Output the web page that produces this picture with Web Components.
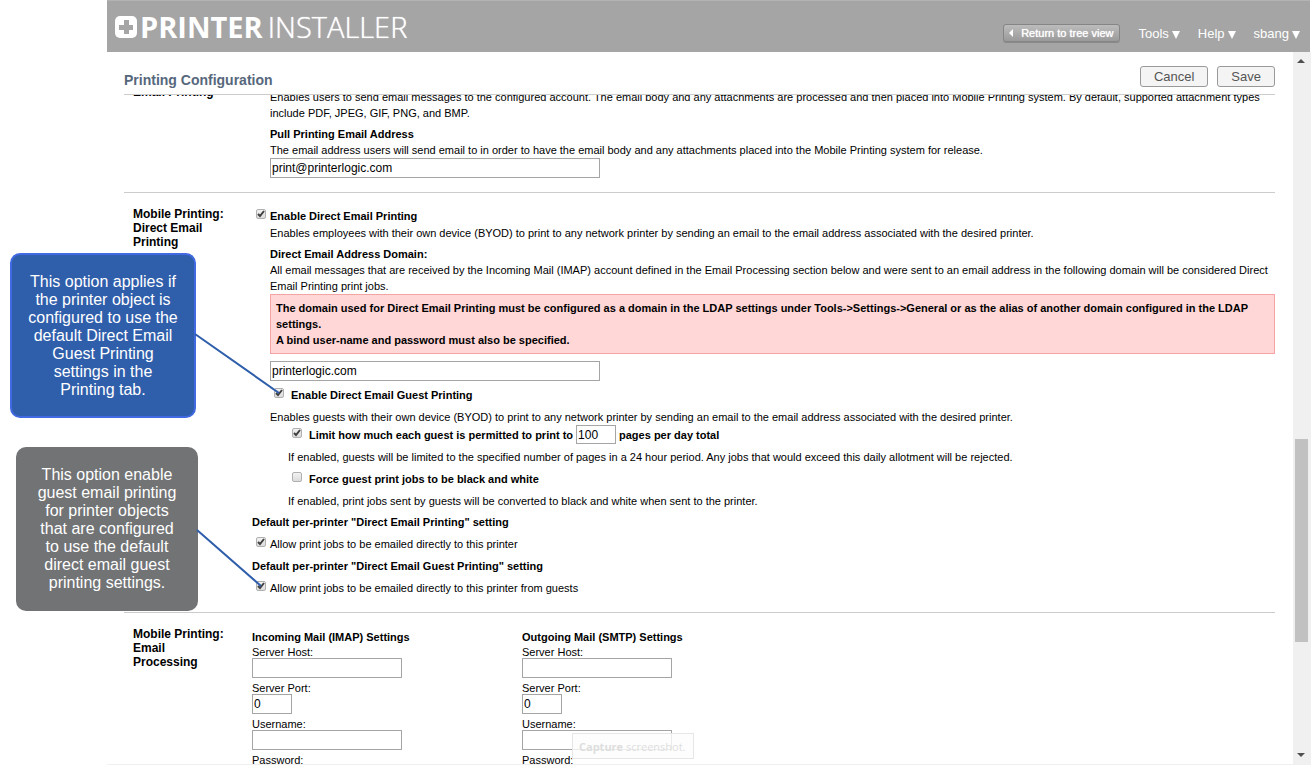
<!DOCTYPE html>
<html lang="en">
<head>
<meta charset="utf-8">
<title>Printer Installer - Printing Configuration</title>
<style>
  body { margin: 0; background: #fff; color: #000; font: 11px/16px "Liberation Sans", Arial, sans-serif; }
  b { font-weight: bold; }
</style>
</head>
<body>
<pi-app>
  <pi-header slot="header">
    <pi-menu>Tools</pi-menu>
    <pi-menu>Help</pi-menu>
    <pi-menu>sbang</pi-menu>
  </pi-header>
  <pi-titlebar slot="title">Printing Configuration</pi-titlebar>

  <pi-section heading="Email Printing" class="first">
    <pi-text indent="1">Enables users to send email messages to the configured account. The email body and any attachments are processed and then placed into Mobile Printing system. By default, supported attachment types include PDF, JPEG, GIF, PNG, and BMP.</pi-text>
    <pi-field indent="1" bold gap="5" label="Pull Printing Email Address" value="print@printerlogic.com">The email address users will send email to in order to have the email body and any attachments placed into the Mobile Printing system for release.</pi-field>
  </pi-section>

  <pi-section heading="Mobile Printing: Direct Email Printing">
    <pi-check bold checked label="Enable Direct Email Printing"></pi-check>
    <pi-text indent="1" gap="1">Enables employees with their own device (BYOD) to print to any network printer by sending an email to the email address associated with the desired printer.</pi-text>
    <pi-field indent="1" bold gap="5" label="Direct Email Address Domain:" value="printerlogic.com">All email messages that are received by the Incoming Mail (IMAP) account defined in the Email Processing section below and were sent to an email address in the following domain will be considered Direct Email Printing print jobs.<pi-alert slot="note">The domain used for Direct Email Printing must be configured as a domain in the LDAP settings under Tools-&gt;Settings-&gt;General or as the alias of another domain configured in the LDAP settings.<br>A bind user-name and password must also be specified.</pi-alert></pi-field>
    <pi-check indent="1" wide bold checked gap="6" label="Enable Direct Email Guest Printing"></pi-check>
    <pi-text indent="1" gap="6">Enables guests with their own device (BYOD) to print to any network printer by sending an email to the email address associated with the desired printer.</pi-text>
    <pi-check indent="2" wide bold checked label="Limit how much each guest is permitted to print to"><pi-pages></pi-pages></pi-check>
    <pi-text indent="2" gap="5">If enabled, guests will be limited to the specified number of pages in a 24 hour period. Any jobs that would exceed this daily allotment will be rejected.</pi-text>
    <pi-check indent="2" wide bold gap="6" label="Force guest print jobs to be black and white"></pi-check>
    <pi-text indent="2" gap="6">If enabled, print jobs sent by guests will be converted to black and white when sent to the printer.</pi-text>
    <pi-text gap="5"><b>Default per-printer "Direct Email Printing" setting</b></pi-text>
    <pi-check checked gap="6" label="Allow print jobs to be emailed directly to this printer"></pi-check>
    <pi-text gap="6"><b>Default per-printer "Direct Email Guest Printing" setting</b></pi-text>
    <pi-check checked gap="6" label="Allow print jobs to be emailed directly to this printer from guests"></pi-check>
  </pi-section>

  <pi-section heading="Mobile Printing: Email Processing" class="last">
    <pi-mail>
      <pi-server heading="Incoming Mail (IMAP) Settings"></pi-server>
      <pi-server heading="Outgoing Mail (SMTP) Settings"></pi-server>
    </pi-mail>
  </pi-section>

  <pi-callouts slot="overlay">
    <pi-callout tone="blue">This option applies if the printer object is configured to use the default Direct Email Guest Printing settings in the Printing tab.</pi-callout>
    <pi-callout tone="gray">This option enable guest email printing for printer objects that are configured to use the default direct email guest printing settings.</pi-callout>
  </pi-callouts>
  <pi-hint slot="overlay"><b>Capture</b> screenshot.</pi-hint>
</pi-app>

<script>
const define = (name, render) => customElements.define(name, class extends HTMLElement {
  constructor() {
    super();
    this.attachShadow({ mode: "open" });
  }
  connectedCallback() {
    const t = document.createElement("template");
    t.innerHTML = render(this);
    this.shadowRoot.replaceChildren(t.content.cloneNode(true));
  }
});
const indentOf = el => Number(el.getAttribute("indent") || 0) * 18;
const gapOf = el => Number(el.getAttribute("gap") || 0);
const inputCss = `input[type=text] { box-sizing: border-box; height: 20px; margin: 0; padding: 0 1px; border: 1px solid #a5a5a5; background: #fff; color: #000; font: 12px "Liberation Sans", Arial, sans-serif; }`;

define("pi-app", () => `
  <style>
    :host { display: flex; flex-direction: column; position: relative; box-sizing: border-box; height: 100vh; padding-left: 107px; overflow: hidden; }
    .work { flex: 1; min-height: 0; display: flex; border-bottom: 1px solid #f0f0f0; }
    .pane { flex: 1; min-width: 0; display: flex; flex-direction: column; padding: 0 18px 0 17px; }
    .scroll { flex: 1; min-height: 0; overflow: hidden; }
  </style>
  <slot name="header"></slot>
  <div class="work">
    <main class="pane">
      <slot name="title"></slot>
      <div class="scroll"><slot></slot></div>
    </main>
    <pi-scrollbar></pi-scrollbar>
  </div>
  <slot name="overlay"></slot>`);

define("pi-header", () => `
  <style>
    :host { display: flex; justify-content: space-between; box-sizing: border-box; height: 52px; margin-right: 1px; padding: 0 10px 0 8px; background: #a5a5a5; border-top: 1px solid #b3b3b3; color: #fff; }
    .logo { display: flex; align-items: center; gap: 3px; height: 52px; color: #fff; text-decoration: none; font: 29px/52px "Open Sans", "Noto Sans", sans-serif; }
    .logo b { font-weight: 700; }
    .logo span { font-weight: 300; margin-left: 2px; text-shadow: 0 0 1px #fff; }
    nav { display: flex; align-items: center; gap: 18px; height: 66px; }
    .back { display: flex; align-items: center; gap: 7px; box-sizing: border-box; height: 18px; margin-bottom: 2px; padding: 0 6px 0 5px; border: 1px solid #858585; border-radius: 3px; background: linear-gradient(#bcbcbc, #9a9a9a); box-shadow: 0 1px 0 #8a8a8a; color: #fff; font: 11px/16px "Liberation Sans", Arial, sans-serif; text-shadow: 0 0 1px #fff; }
  </style>
  <a class="logo" href="#">
    <svg width="22" height="22" viewBox="0 0 22 22" aria-hidden="true"><rect width="22" height="22" rx="5" fill="#fff"/><path d="M9 4h5v5h4v5h-4v4H9v-4H4V9h5z" fill="#a5a5a5"/></svg>
    <b>PRINTER</b><span>INSTALLER</span>
  </a>
  <nav>
    <button class="back" type="button"><svg width="5" height="8" viewBox="0 0 5 8" aria-hidden="true"><path d="M4 0v8L0 4z" fill="#fff"/></svg>Return to tree view</button>
    <slot></slot>
  </nav>`);

define("pi-menu", () => `
  <style>
    :host { display: block; }
    button { display: flex; align-items: center; gap: 3px; margin: 0; padding: 0; border: 0; background: none; color: #fff; font: 13px/18px "Liberation Sans", Arial, sans-serif; }
    svg { margin-top: 2px; }
  </style>
  <button type="button"><slot></slot><svg width="8" height="8" viewBox="0 0 8 8" aria-hidden="true"><path d="M0 0h8L4 8z" fill="#fff"/></svg></button>`);

define("pi-titlebar", () => `
  <style>
    :host { display: flex; justify-content: space-between; align-items: flex-start; box-sizing: border-box; height: 43px; padding-top: 14px; border-bottom: 1px solid #ccc; }
    h1 { margin: 6px 0 0; color: #56677c; font: bold 14px/16px "Liberation Sans", Arial, sans-serif; }
    div { display: flex; gap: 9px; }
    button { box-sizing: border-box; height: 21px; padding: 0 13px; border: 1px solid #999; border-radius: 3px; background: #f4f4f4; color: #555; font: 13px/18px "Liberation Sans", Arial, sans-serif; }
  </style>
  <h1><slot></slot></h1>
  <div><button type="button">Cancel</button><button type="button">Save</button></div>`);

define("pi-scrollbar", () => `
  <style>
    :host { display: flex; flex-direction: column; flex: 0 0 18px; background: #f0f0f0; }
    button { display: flex; align-items: center; justify-content: center; height: 18px; padding: 0 2px 0 0; border: 0; background: none; }
    .before { flex: 369; }
    .thumb { flex: 203; margin: 0 3px 0 2px; background: #c1c1c1; }
    .after { flex: 104; }
  </style>
  <button type="button" aria-label="Scroll up"><svg width="8" height="4"><path d="M0 4L4 0L8 4z" fill="#505050"/></svg></button>
  <div class="before"></div><div class="thumb"></div><div class="after"></div>
  <button type="button" aria-label="Scroll down"><svg width="8" height="4"><path d="M0 0L4 4L8 0z" fill="#505050"/></svg></button>`);

define("pi-section", el => `
  <style>
    :host { display: grid; grid-template-columns: 119px minmax(0, 1fr); padding: 14px 0 16px 9px; border-bottom: 1px solid #ccc; }
    :host(.first) { margin-top: -24px; padding-bottom: 14px; }
    :host(.first) .body { padding-top: 4px; }
    :host(.last) { border-bottom: 0; }
    h2 { width: 94px; margin: 0; font: bold 12px/14px "Liberation Sans", Arial, sans-serif; }
    .body { padding-top: 1px; }
  </style>
  <h2>${el.getAttribute("heading")}</h2>
  <div class="body"><slot></slot></div>`);

define("pi-text", el => `
  <style>:host { display: block; margin-left: ${indentOf(el)}px; margin-top: ${gapOf(el)}px; }</style>
  <slot></slot>`);

define("pi-alert", () => `
  <style>:host { display: block; margin-bottom: 7px; padding: 5px; border: 1px solid #f5a3a3; background: #ffd7d7; font-weight: bold; }</style>
  <slot></slot>`);

define("pi-field", el => `
  <style>
    :host { display: block; margin-left: ${indentOf(el)}px; margin-top: ${gapOf(el)}px; }
    label { display: block; font-weight: bold; }
    input { display: block; width: 330px; }
    ${inputCss}
  </style>
  <label for="f">${el.getAttribute("label")}</label>
  <slot></slot>
  <slot name="note"></slot>
  <input id="f" type="text" value="${el.getAttribute("value")}">`);

define("pi-check", el => `
  <style>
    :host { display: flex; align-items: center; margin-left: ${indentOf(el)}px; margin-top: ${gapOf(el)}px; font-weight: ${el.hasAttribute("bold") ? "bold" : "normal"}; }
    input { appearance: none; flex: none; box-sizing: border-box; width: 10px; height: 10px; margin: 0 ${el.hasAttribute("wide") ? 7 : 4}px 4px 4px; border: 1px solid #b0b0b0; border-radius: 2px; background: linear-gradient(#f2f2f2, #dcdcdc); }
    input:checked { background: url("data:image/svg+xml,%3Csvg xmlns='http://www.w3.org/2000/svg' viewBox='0 0 8 8'%3E%3Cpath d='M1 4l2 2L7 1' fill='none' stroke='%23404040' stroke-width='2'/%3E%3C/svg%3E"), linear-gradient(#f2f2f2, #dcdcdc); }
  </style>
  <input id="c" type="checkbox"${el.hasAttribute("checked") ? " checked" : ""}><label for="c">${el.getAttribute("label")}</label><slot></slot>`);

define("pi-pages", () => `
  <style>
    :host { display: flex; align-items: center; gap: 3px; margin-left: 3px; }
    ${inputCss}
    input[type=text] { width: 40px; height: 19px; }
  </style>
  <input id="p" type="text" value="100"><label for="p">pages per day total</label>`);

define("pi-mail", () => `
  <style>:host { display: grid; grid-template-columns: 270px 270px; padding-top: 1px; }</style>
  <slot></slot>`);

define("pi-server", el => `
  <style>
    :host { display: block; }
    h3 { margin: 0 0 1px; font: bold 11px/16px "Liberation Sans", Arial, sans-serif; }
    label { display: block; line-height: 12px; }
    input { display: block; width: 150px; }
    ${inputCss}
    input[type=text] { margin-bottom: 4px; }
    #port { width: 40px; }
  </style>
  <h3>${el.getAttribute("heading")}</h3>
  <label for="host">Server Host:</label><input id="host" type="text">
  <label for="port">Server Port:</label><input id="port" type="text" value="0">
  <label for="user">Username:</label><input id="user" type="text">
  <label for="pass">Password:</label><input id="pass" type="text">`);

define("pi-callouts", () => `
  <style>
    :host { position: absolute; inset: 0; pointer-events: none; }
    svg { position: absolute; left: 0; top: 0; }
  </style>
  <slot></slot>
  <svg width="300" height="600" aria-hidden="true"><path d="M195 334L279 393M197 530L261 586" fill="none" stroke="#2f5eab" stroke-width="2"/></svg>`);

define("pi-callout", el => `
  <style>
    :host { position: absolute; display: flex; align-items: center; box-sizing: border-box; border-radius: 10px; color: #fff; font-size: 16px; line-height: 18px; text-align: center; }
    :host([tone=blue]) { left: 10px; top: 253px; width: 186px; height: 165px; padding: 0 14px; background: #2f5eab; border: 2px solid #4169e1; }
    :host([tone=gray]) { left: 16px; top: 447px; width: 182px; height: 164px; padding: 0 18px; background: #717375; }
    p { margin: 0; }
  </style>
  <p><slot></slot></p>`);

define("pi-hint", () => `
  <style>:host { position: absolute; left: 572px; top: 733px; box-sizing: border-box; width: 122px; height: 26px; padding: 0 6px; border: 1px solid #e6e6e6; background: rgba(252, 252, 252, .8); color: #dedede; font: 11px/25px "Open Sans", "Noto Sans", sans-serif; white-space: nowrap; }</style>
  <slot></slot>`);
</script>
</body>
</html>
